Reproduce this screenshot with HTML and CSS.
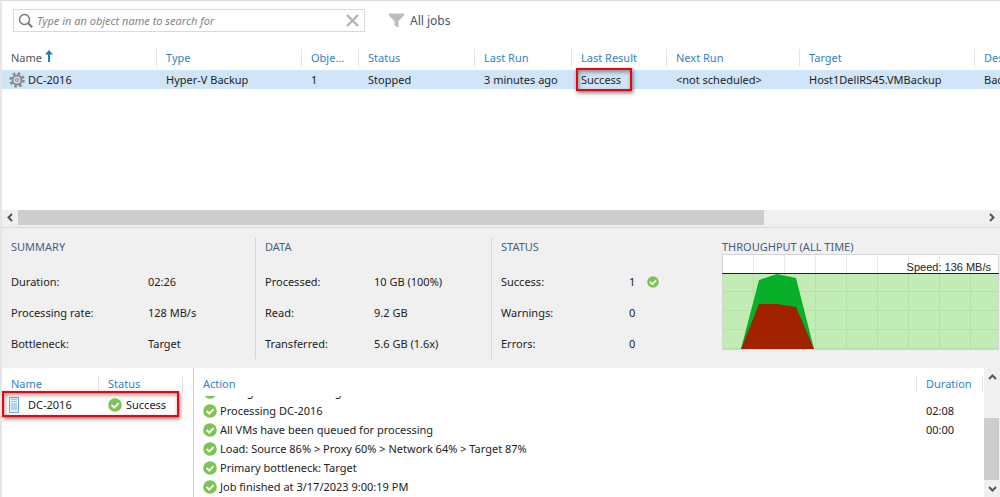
FILE: index.html
```html
<!DOCTYPE html>
<html lang="en">
<head>
    <meta charset="utf-8"/>
    <title>Backup Jobs</title>
    <link rel="stylesheet" href="styles.css">
</head>
<body>

<!-- Shared icons -->
<svg class="defs" width="0" height="0">
    <symbol id="ok" viewBox="0 0 14 14">
        <circle cx="7" cy="7" r="6.8" fill="#7cc455"/>
        <path d="M3.6 6.9l2.6 2.7 4.4-4.5" fill="none" stroke="#fff" stroke-width="2"/>
    </symbol>
</svg>

<div class="toolbar">
    <div class="search">
        <svg width="16" height="16" viewBox="0 0 16 16" fill="none" stroke="#777">
            <circle cx="6.5" cy="6.5" r="5" stroke-width="1.4"/>
            <path d="M10.2 10.2l4 4" stroke-width="2"/>
        </svg>
        <input type="text" aria-label="Search" placeholder="Type in an object name to search for">
        <button aria-label="Clear">
            <svg width="13" height="13" viewBox="0 0 13 13" stroke="#b4b4b4" stroke-width="2.4">
                <path d="M1 1l11 11M12 1L1 12"/>
            </svg>
        </button>
    </div>
    <button class="filter">
        <svg width="15" height="15" viewBox="0 0 15 15"><path d="M0 0.500h15v2L9.500 8v6.500l-4-2V8L0 2.500z" fill="#bdbdbd"/></svg>
        All jobs
    </button>
</div>

<div class="jobs">
    <table>
        <colgroup>
            <col class="c-name"><col class="c-type"><col class="c-objects"><col class="c-status"><col class="c-run">
            <col class="c-result"><col class="c-next"><col class="c-target"><col>
        </colgroup>
        <thead>
            <tr>
                <th class="sorted"><span>Name
                    <svg width="8" height="12" viewBox="0 0 8 12"><path d="M4 0L8 4.500H5V12H3V4.500H0z" fill="#1c7fc4"/></svg></span></th>
                <th><span>Type</span></th>
                <th><span>Obje...</span></th>
                <th><span>Status</span></th>
                <th><span>Last Run</span></th>
                <th><span>Last Result</span></th>
                <th><span>Next Run</span></th>
                <th><span>Target</span></th>
                <th><span>Description</span></th>
            </tr>
        </thead>
        <tbody>
            <tr>
                <td class="job">
                    <svg width="16" height="16" viewBox="0 0 16 16" fill="none" stroke="#8b8b8b">
                        <circle cx="8" cy="8" r="6.500" stroke-width="2.600" stroke-dasharray="2.550"/>
                        <circle cx="8" cy="8" r="4.500" stroke-width="2"/>
                        <circle cx="8" cy="8" r="1.500" stroke-width="1.200"/>
                    </svg>DC-2016</td>
                <td>Hyper-V Backup</td>
                <td>1</td>
                <td>Stopped</td>
                <td>3 minutes ago</td>
                <td class="marked">Success</td>
                <td>&lt;not scheduled&gt;</td>
                <td>Host1DellRS45.VMBackup</td>
                <td>Backup job</td>
            </tr>
        </tbody>
    </table>
</div>

<div class="hscroll">
    <button aria-label="Scroll left"><svg width="6" height="9" viewBox="0 0 6 9"><path d="M5 1L1.500 4.500 5 8"/></svg></button>
    <div class="track"><div class="thumb"></div></div>
    <button aria-label="Scroll right"><svg width="6" height="9" viewBox="0 0 6 9"><path d="M1 1l3.500 3.500L1 8"/></svg></button>
</div>

<div class="stats">
    <section>
        <h2>SUMMARY</h2>
        <dl>
            <dt>Duration:</dt><dd>02:26</dd>
            <dt>Processing rate:</dt><dd>128 MB/s</dd>
            <dt>Bottleneck:</dt><dd>Target</dd>
        </dl>
    </section>
    <section class="data">
        <h2>DATA</h2>
        <dl>
            <dt>Processed:</dt><dd>10 GB (100%)</dd>
            <dt>Read:</dt><dd>9.2 GB</dd>
            <dt>Transferred:</dt><dd>5.6 GB (1.6x)</dd>
        </dl>
    </section>
    <section class="status">
        <h2>STATUS</h2>
        <dl>
            <dt>Success:</dt><dd>1 <svg width="12" height="12"><use href="#ok"/></svg></dd>
            <dt>Warnings:</dt><dd>0</dd>
            <dt>Errors:</dt><dd>0</dd>
        </dl>
    </section>
    <section class="throughput">
        <h2>THROUGHPUT (ALL TIME)</h2>
        <div class="chart">
            <p>Speed: 136 MB/s</p>
            <svg viewBox="0 0 277 96" preserveAspectRatio="none">
                <path d="M0 0h277v96H0z" fill="#fff"/>
                <path d="M0 19h277v77H0z" fill="#c1ecb5"/>
                <path d="M31.500 0v19M62.500 0v19M93.500 0v19M124.500 0v19M155.500 0v19M186.500 0v19M217.500 0v19M248.500 0v19" stroke="#e9e9e9"/>
                <path d="M31.500 19v77M62.500 19v77M93.500 19v77M124.500 19v77M155.500 19v77M186.500 19v77M217.500 19v77M248.500 19v77M0 37.500h277M0 56.500h277M0 75.500h277M0 94.500h277" stroke="#b5e0aa" fill="none"/>
                <path d="M19 95L37 26l18-6 19 4 18 71z" fill="#08b029"/>
                <path d="M19 95L37 50h18l19 3 18 42z" fill="#a02200"/>
                <path d="M.5.5h276v95H.5z" fill="none" stroke="#d5d5d5"/>
                <path d="M0 19.500h277" stroke="#222"/>
            </svg>
        </div>
    </section>
</div>

<div class="details">
    <div class="objects">
        <table>
            <colgroup><col class="c-object"><col></colgroup>
            <thead>
                <tr><th><span>Name</span></th><th class="last"><span>Status</span></th></tr>
            </thead>
            <tbody>
                <tr>
                    <td class="vm"><svg width="10" height="16" viewBox="0 0 10 16">
                        <path d="M.5.5h9v15h-9z" fill="#e3f1fc" stroke="#6caad9"/>
                        <path d="M2 2.500h6M2 4.500h6" stroke="#9bc6e8"/>
                        <path d="M2 6h6v7H2z" fill="#b3d4ef"/>
                    </svg>DC-2016</td>
                    <td class="state"><svg width="14" height="14"><use href="#ok"/></svg>Success</td>
                </tr>
            </tbody>
        </table>
    </div>
    <div class="log">
        <div class="log-head"><span>Action</span><span class="time">Duration</span></div>
        <div class="log-view">
            <table>
                <colgroup><col><col class="c-time"></colgroup>
                <tr><td><svg width="14" height="14"><use href="#ok"/></svg>Changed block tracking is enabled</td><td></td></tr>
                <tr><td><svg width="14" height="14"><use href="#ok"/></svg>Processing DC-2016</td><td>02:08</td></tr>
                <tr><td><svg width="14" height="14"><use href="#ok"/></svg>All VMs have been queued for processing</td><td>00:00</td></tr>
                <tr><td><svg width="14" height="14"><use href="#ok"/></svg>Load: Source 86% &gt; Proxy 60% &gt; Network 64% &gt; Target 87%</td><td></td></tr>
                <tr><td><svg width="14" height="14"><use href="#ok"/></svg>Primary bottleneck: Target</td><td></td></tr>
                <tr><td><svg width="14" height="14"><use href="#ok"/></svg>Job finished at 3/17/2023 9:00:19 PM</td><td></td></tr>
            </table>
        </div>
    </div>
    <div class="vscroll">
        <button aria-label="Scroll up"><svg width="9" height="6" viewBox="0 0 9 6"><path d="M1 5l3.500-3.500L8 5"/></svg></button>
        <div class="track"><div class="thumb"></div></div>
        <button aria-label="Scroll down"><svg width="9" height="6" viewBox="0 0 9 6"><path d="M1 1l3.500 3.500L8 1"/></svg></button>
    </div>
</div>

</body>
</html>
```
FILE: styles.css
```css
*, ::after {
    box-sizing: border-box;
}

body {
    margin: 0;
    min-height: 100vh;
    display: flex;
    flex-direction: column;
    border-top: 1px solid #dcdcdc;
    border-left: 2px solid #e6e6e6;
    background: #fff;
    color: #222;
    font-family: "Noto Sans", "Open Sans", sans-serif;
    font-size: 11px;
    line-height: 18px;
    overflow-x: hidden;
}

.defs {
    position: absolute;
}

button {
    padding: 0;
    border: 0;
    background: none;
    font: inherit;
    color: inherit;
    display: flex;
    align-items: center;
    justify-content: center;
}

/* toolbar */
.toolbar {
    display: flex;
    align-items: center;
    gap: 24px;
    padding: 8px 11px 14px;
}

.search {
    display: flex;
    align-items: center;
    width: 352px;
    height: 23px;
    padding: 0 5px 0 4px;
    border: 1px solid #d9d9d9;
}

.search input {
    flex: 1;
    min-width: 0;
    padding: 0 3px;
    border: 0;
    outline: 0;
    background: none;
    font: inherit;
    font-style: italic;
}

.search input::placeholder {
    color: #858585;
    opacity: 1;
}

.filter {
    gap: 6px;
    color: #44566b;
    font-size: 12px;
}

/* tables */
table {
    width: 100%;
    table-layout: fixed;
    border-collapse: collapse;
}

th, td {
    padding: 0;
    text-align: left;
    font-weight: normal;
    white-space: nowrap;
}

th {
    color: #2f83c3;
}

th span {
    display: block;
    padding-left: 9px;
    border-left: 1px solid #e4e4e4;
}

th:first-child span {
    padding-left: 8px;
    border-color: transparent;
}

td {
    height: 19px;
    padding-left: 10px;
}

td svg {
    vertical-align: middle;
    margin: -2px 4px 0 0;
}

.jobs {
    flex: 1;
    min-height: 163px;
    overflow: hidden;
}

.jobs table {
    width: 1290px;
}

.jobs th {
    padding: 3px 0;
}

.jobs th.sorted {
    color: #555;
}

.jobs tbody tr {
    background: #d0e5f8;
}

.jobs td.job {
    padding-left: 7px;
}

.job svg {
    margin-right: 3px;
}

.c-name { width: 154px; }
.c-type { width: 145px; }
.c-objects { width: 57px; }
.c-status { width: 116px; }
.c-run { width: 97px; }
.c-result { width: 95px; }
.c-next { width: 133px; }
.c-target { width: 175px; }
.c-object { width: 96px; }
.c-time { width: 68px; }

/* red callouts */
.marked, .vm {
    position: relative;
}

.marked::after, .vm::after {
    content: "";
    position: absolute;
    top: -2px;
    bottom: -2px;
    left: 5px;
    width: 56px;
    border: 2px solid #f4000a;
    box-shadow: 1px 2px 4px rgba(0, 0, 0, 0.5), inset 1px 2px 4px rgba(0, 0, 0, 0.4);
}

.vm::after {
    top: -4px;
    left: 0;
    width: 177px;
}

/* scrollbars */
.hscroll {
    display: flex;
    height: 18px;
    padding-bottom: 2px;
    border-bottom: 1px solid #d9d9d9;
    background: #f0f0f0;
}

.hscroll button {
    width: 16px;
}

.track {
    flex: 1;
}

.thumb {
    background: #cdcdcd;
}

.hscroll .thumb {
    width: 77.2%;
    height: 100%;
}

.hscroll path, .vscroll path {
    fill: none;
    stroke: #555;
    stroke-width: 2;
}

.vscroll {
    display: flex;
    flex-direction: column;
    width: 16px;
    background: #f0f0f0;
}

.vscroll button {
    height: 17px;
}

.vscroll .track {
    display: flex;
    align-items: flex-end;
}

.vscroll .thumb {
    width: 15px;
    height: 65%;
}

/* job statistics */
.stats {
    display: grid;
    grid-template-columns: 253fr 236fr 231fr 278fr;
    padding: 10px 0 9px;
    background: #f0f0f0;
}

.stats section {
    padding-left: 9px;
}

.stats .data, .stats .status {
    border-left: 1px solid #d6d6d6;
}

h2 {
    margin: 0 0 10px;
    font-size: 11px;
    font-weight: normal;
    color: #44607f;
}

dl {
    display: grid;
    grid-template-columns: 137px 1fr;
    margin: 0;
    line-height: 31px;
}

dd {
    margin: 0;
}

.data dl {
    grid-template-columns: 109px 1fr;
}

.status dl {
    grid-template-columns: 128px 1fr;
}

.status svg {
    margin-left: 9px;
    vertical-align: -2px;
}

.stats .throughput {
    padding: 0 1px 0 0;
}

.throughput h2 {
    margin: 0 0 -2px;
}

.chart {
    position: relative;
}

.chart svg {
    display: block;
    width: 100%;
    height: 96px;
}

.chart p {
    position: absolute;
    top: 4px;
    right: 8px;
    margin: 0;
    font: 11px/18px "Liberation Sans", Arial, sans-serif;
}

/* details */
.details {
    display: flex;
}

.objects {
    width: 192px;
    padding-right: 10px;
    border-right: 1px solid #cfcfcf;
}

.objects th {
    padding: 7px 0 2px;
}

.objects .last span {
    border-right: 1px solid #e4e4e4;
}

.objects td {
    height: 20px;
}

.objects td.vm {
    padding-left: 7px;
}

.vm svg {
    margin-right: 9px;
}

.log {
    flex: 1;
    min-width: 0;
}

.log-head {
    display: flex;
    justify-content: space-between;
    padding: 7px 1px 3px 9px;
    color: #2f83c3;
}

.log-head .time {
    width: 67px;
    padding-left: 9px;
    border-left: 1px solid #e4e4e4;
    border-right: 1px solid #e4e4e4;
}

.log-view {
    overflow: hidden;
    padding-bottom: 1px;
}

/* scrolled to the end, first row is partly out of view */
.log-view table {
    margin-top: -14px;
}

.log-view td:first-child {
    padding-left: 9px;
}

.log-view svg {
    margin-right: 3px;
}
```
